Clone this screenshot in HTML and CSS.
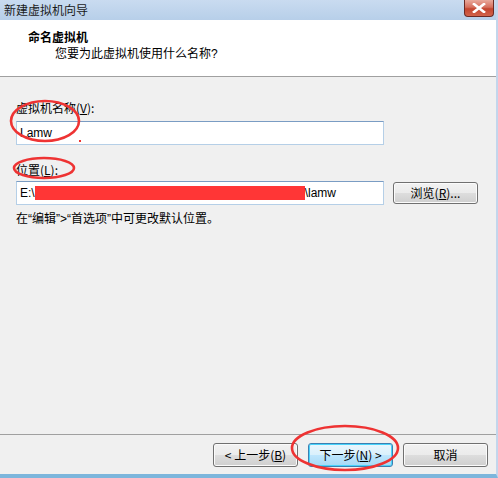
FILE: index.html
```html
<!DOCTYPE html>
<html lang="zh-CN">
<head>
<meta charset="utf-8">
<title>新建虚拟机向导</title>
<link rel="stylesheet" href="styles.css">
</head>
<body>
<div class="window">
  <div class="titlebar">
    <span class="title">新建虚拟机向导</span>
    <div class="close">
      <svg width="16" height="10" viewBox="0 0 16 10"><path d="M3 1 L13 9 M13 1 L3 9" stroke="#fff" stroke-width="2.6" stroke-linecap="square"/></svg>
    </div>
  </div>
  <div class="main">
    <div class="header">
      <div class="h-title">命名虚拟机</div>
      <div class="h-sub">您要为此虚拟机使用什么名称<span class="lat">?</span></div>
    </div>
    <div class="body">
      <div class="label">虚拟机名称(<u>V</u>):</div>
      <div class="input">Lamw</div>
      <div class="label label2">位置(<u>L</u>):</div>
      <div class="row">
        <div class="input"><span>E:\</span><span class="redact"></span><span>\lamw</span></div>
        <div class="btn browse">浏览(<u>R</u>)...</div>
      </div>
      <div class="note">在<span class="lat">“</span>编辑<span class="lat">”&gt;“</span>首选项<span class="lat">”</span>中可更改默认位置。</div>
    </div>
    <div class="footer">
      <div class="btn">&lt; 上一步(<u>B</u>)</div>
      <div class="btn default">下一步(<u>N</u>) &gt;</div>
      <div class="btn">取消</div>
    </div>
  </div>
  <svg class="marks" width="498" height="478" viewBox="0 0 498 478">
    <ellipse cx="45" cy="121" rx="34" ry="20" fill="none" stroke="#ee3333" stroke-width="2.6"/>
    <ellipse cx="44" cy="168" rx="30" ry="10" fill="none" stroke="#ee3333" stroke-width="2.6"/>
    <ellipse cx="345" cy="448" rx="53" ry="22" fill="none" stroke="#ee3333" stroke-width="2.6"/>
    <rect x="79" y="140" width="2" height="2" fill="#ee3333"/>
  </svg>
</div>
</body>
</html>
```
FILE: styles.css
```css
* { box-sizing: border-box; }
html, body { margin: 0; padding: 0; }
body {
  width: 498px;
  height: 478px;
  overflow: hidden;
  font-family: "Noto Sans CJK SC", "Liberation Sans", sans-serif;
  font-size: 12px;
  color: #000;
  background: #f0f0f0;
}
u { text-decoration: underline; text-underline-offset: 1px; }
.lat { font-family: "Liberation Sans", sans-serif; }
.window {
  position: relative;
  width: 498px;
  height: 478px;
  display: flex;
  flex-direction: column;
  border-right: 2px solid #c3d6ec;
  border-bottom: 4px solid #7db6dc;
}
.titlebar {
  height: 20px;
  background: linear-gradient(#c9dbf0, #b7cfe9);
  display: flex;
  align-items: flex-start;
  justify-content: space-between;
}
.title {
  font-size: 12px;
  line-height: 20px;
  padding-left: 4px;
  color: #1a1a1a;
}
.close {
  width: 30px;
  height: 17px;
  margin-right: 2px;
  border: 1px solid #6b2a25;
  border-top: none;
  border-radius: 0 0 4px 4px;
  background: linear-gradient(#e9a99c, #d6705e 45%, #c4452f 55%, #d2644c);
  display: flex;
  align-items: center;
  justify-content: center;
}
.main {
  flex: 1;
  display: flex;
  flex-direction: column;
}
.header {
  height: 57px;
  background: #fff;
  border-bottom: 1px solid #a0a0a0;
  padding: 9px 0 0 28px;
}
.h-title {
  font-weight: bold;
  line-height: 16px;
}
.h-sub {
  padding-left: 27px;
  line-height: 16px;
}
.body {
  flex: 1;
  padding: 23px 0 0 16px;
}
.label {
  line-height: 16px;
  height: 21px;
}
.label2 { margin-top: 17px; height: 19px; }
.input {
  width: 368px;
  height: 24px;
  background: #fff;
  border: 1px solid #b5cfe7;
  border-top-color: #7a9cc3;
  padding: 0 0 0 3px;
  line-height: 21px;
  font-family: "Liberation Sans", sans-serif;
  display: flex;
  align-items: center;
}
.row {
  display: flex;
  align-items: center;
  gap: 9px;
}
.redact {
  display: inline-block;
  width: 270px;
  height: 14px;
  background: #ff3636;
}
.btn {
  width: 85px;
  height: 23px;
  border: 1px solid #707070;
  border-radius: 3px;
  background: linear-gradient(#f2f2f2 0%, #ebebeb 50%, #dddddd 51%, #cfcfcf 100%);
  display: flex;
  align-items: center;
  justify-content: center;
  line-height: 16px;
  box-shadow: inset 0 0 0 1px #fbfbfb;
}
.browse { height: 22px; }
.note {
  margin-top: 5px;
  line-height: 16px;
}
.footer {
  height: 40px;
  border-top: 1px solid #a0a0a0;
  display: flex;
  justify-content: flex-end;
  align-items: flex-start;
  gap: 10px;
  padding: 8px 8px 0 0;
}
.footer .btn { height: 24px; }
.btn.default {
  border-color: #3c7fb1;
  box-shadow: inset 0 0 0 1px #48d3fb;
  background: linear-gradient(#eaf6fd 0%, #d9f0fc 50%, #bee6fd 51%, #a7d9f5 100%);
}
.marks {
  position: absolute;
  left: 0;
  top: 0;
  pointer-events: none;
}
```
